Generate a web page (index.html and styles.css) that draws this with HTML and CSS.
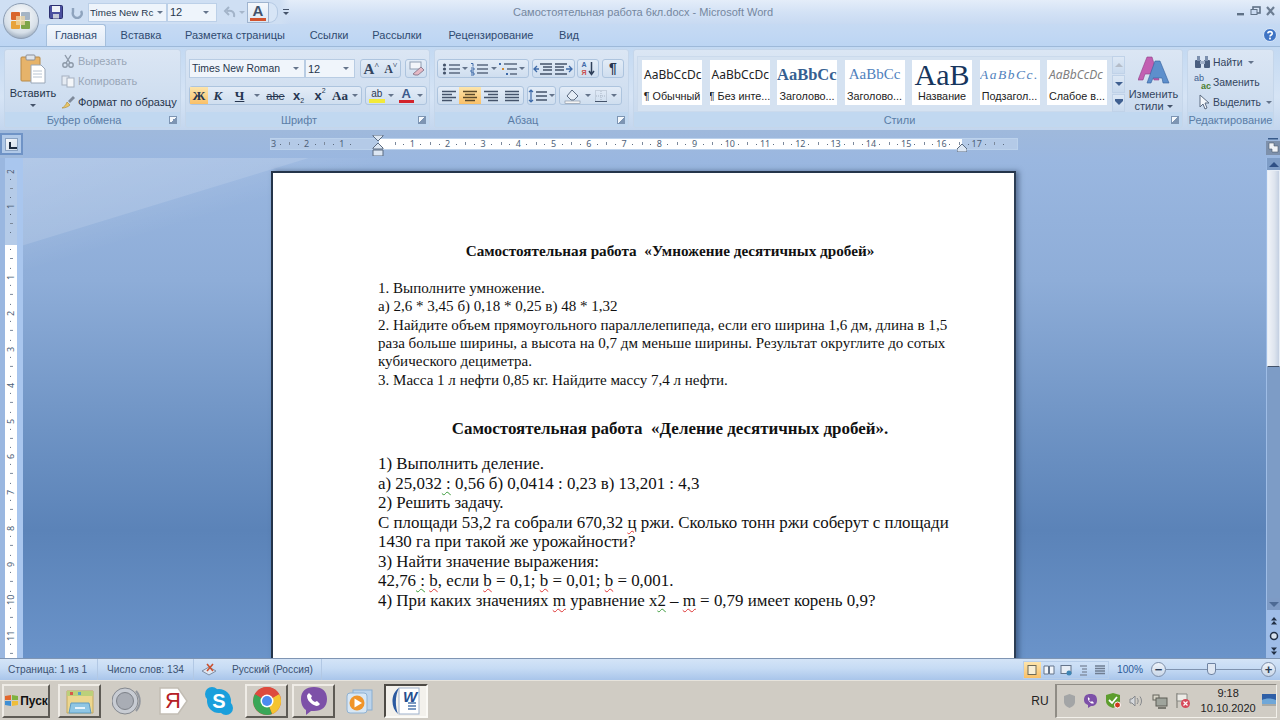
FILE: index.html
```html
<!DOCTYPE html>
<html lang="ru">
<head>
<meta charset="utf-8">
<title>Самостоятельная работа 6кл.docx - Microsoft Word</title>
<link rel="stylesheet" href="styles.css">
</head>
<body>
<div class="app">
  <div class="orb">
    <svg width="36" height="36" viewBox="0 0 36 36"><defs><radialGradient id="o" cx=".5" cy=".35" r=".7"><stop offset="0" stop-color="#fff"/><stop offset=".7" stop-color="#d6dfe8"/><stop offset="1" stop-color="#8a9bb0"/></radialGradient></defs><circle cx="18" cy="18" r="17.5" fill="url(#o)" stroke="#8c9db3"/><rect x="8" y="9" width="9" height="8" rx="1" fill="#d9662b"/><rect x="18" y="9" width="9" height="8" rx="1" fill="#a5b5c5"/><rect x="8" y="18" width="9" height="8" rx="1" fill="#e8a33c"/><rect x="18" y="18" width="9" height="8" rx="1" fill="#7da548"/><rect x="13" y="13" width="9" height="9" fill="#f0d9a8" opacity=".75"/></svg>
  </div>
  <header class="titlebar">
    <div class="qat">
      <svg class="qi" width="14" height="14" viewBox="0 0 14 14"><rect x=".5" y=".5" width="13" height="13" rx="1" fill="#4a4f9e" stroke="#2c3070"/><rect x="3" y="1" width="8" height="6" fill="#eef2f8"/><rect x="4" y="9" width="6" height="4.5" fill="#c4c9d8"/></svg>
      <svg class="qi2" width="14" height="14" viewBox="0 0 14 14"><path d="M3 3v4a4.5 4.5 0 1 0 8 -1" fill="none" stroke="#8ea3bd" stroke-width="2.4"/></svg>
      <div class="qcombo qc1"><span>Times New Rc</span><i class="drop"></i></div>
      <div class="qcombo qc2"><span>12</span><i class="drop"></i></div>
      <div class="qundo"><svg width="14" height="12" viewBox="0 0 14 12"><path d="M11 11c1-5-2-7-7-6M6 1 2 5l4 4" fill="none" stroke="#a3b4c9" stroke-width="2"/></svg><i class="drop pale"></i></div>
      <div class="qcolor"><b class="fa">A</b></div>
      <div class="qend"></div>
      <div class="qmore"><i class="bar"></i><i class="drop dark"></i></div>
    </div>
    <div class="title">Самостоятельная работа 6кл.docx - Microsoft Word</div>
    <div class="winbtns">
      <svg width="40" height="14" viewBox="0 0 40 14"><rect x="2" y="8" width="7" height="2.4" fill="#5f7186"/><rect x="18" y="2" width="7" height="6" fill="none" stroke="#5f7186" stroke-width="1.6"/><rect x="16" y="4.5" width="6" height="5" fill="#c9daf1" stroke="#5f7186"/><path d="M32 2l7 8M39 2l-7 8" stroke="#6c7d92" stroke-width="2.2"/></svg>
    </div>
  </header>

  <nav class="tabs">
    <span class="tab active">Главная</span><span class="tab">Вставка</span><span class="tab">Разметка страницы</span><span class="tab">Ссылки</span><span class="tab">Рассылки</span><span class="tab">Рецензирование</span><span class="tab">Вид</span>
    <svg class="help" width="14" height="14" viewBox="0 0 14 14"><circle cx="7" cy="7" r="6.5" fill="#3f74c4" stroke="#dbe8f8"/><path d="M4.8 5.4C5 3 9.2 3 9.2 5.4 9.2 7 7 7 7 8.6" fill="none" stroke="#fff" stroke-width="1.6"/><rect x="6.1" y="9.6" width="1.8" height="1.8" fill="#fff"/></svg>
  </nav>

  <section class="ribbon">
    <div class="group">
      <div class="gbody clip">
        <div class="paste">
          <svg width="26" height="30" viewBox="0 0 26 30"><rect x="1" y="3" width="19" height="24" rx="1" fill="#e6b36a" stroke="#b88a48"/><rect x="6" y="1" width="9" height="5" rx="1" fill="#dfe5ec" stroke="#8b8f98"/><path d="M11 11h10l4 4v14H11z" fill="#fff" stroke="#9aa7b8"/><path d="M13 17h9M13 20h9M13 23h9" stroke="#b8c4d2"/></svg>
          <span class="pl">Вставить</span>
          <i class="drop dark"></i>
        </div>
        <div class="clips">
          <div class="crow off"><svg width="14" height="14" viewBox="0 0 14 14"><path d="M4 1l5 8M10 1 5 9" stroke="#8d99a8" stroke-width="1.4"/><circle cx="4" cy="11" r="2.2" fill="none" stroke="#8d99a8" stroke-width="1.4"/><circle cx="10" cy="11" r="2.2" fill="none" stroke="#8d99a8" stroke-width="1.4"/></svg><span>Вырезать</span></div>
          <div class="crow off"><svg width="14" height="14" viewBox="0 0 14 14"><rect x="1" y="2" width="7" height="9" fill="#e5ebf3" stroke="#a5b0bf"/><rect x="6" y="4" width="7" height="9" fill="#f4f6f9" stroke="#a5b0bf"/></svg><span>Копировать</span></div>
          <div class="crow"><svg width="14" height="14" viewBox="0 0 14 14"><path d="M1 13c2-1 4-3 5-6l3 3c-2 2-5 3-8 3z" fill="#e9c667" stroke="#a98732" stroke-width=".6"/><path d="M7 6l5-5 2 2-5 5z" fill="#7f8a9a"/></svg><span>Формат по образцу</span></div>
        </div>
      </div>
      <div class="gfoot"><span>Буфер обмена</span><i class="launch"></i></div>
    </div>

    <div class="group">
      <div class="gbody rows">
        <div class="row">
          <div class="combo cfont"><span>Times New Roman</span><i class="drop"></i></div>
          <div class="combo csize"><span>12</span><i class="drop"></i></div>
          <div class="bx grow"><b class="gl lg">A<sup>˄</sup></b><b class="gl sm">A<sup>˅</sup></b></div>
          <div class="bx clear"><svg width="18" height="16" viewBox="0 0 18 16"><rect x="3" y="1" width="11" height="7" fill="#f3f5fa" stroke="#8f9db2"/><path d="M6 13l8-7 3 3-6 5H8z" fill="#e5b8c4" stroke="#8f7f92"/></svg></div>
        </div>
        <div class="row">
          <div class="bx fmt">
            <span class="f hot bold">Ж</span><span class="f it">К</span><span class="f un">Ч</span><i class="drop mid"></i>
            <span class="f strike">abe</span><span class="f sub">x<small>2</small></span><span class="f sup">x<small>2</small></span><span class="f aa">Aa</span><i class="drop mid"></i>
          </div>
          <div class="bx hl">
            <span class="mark"><em>ab</em><u></u></span><i class="drop mid"></i><span class="fcolor"><em>A</em><u></u></span><i class="drop mid"></i>
          </div>
        </div>
      </div>
      <div class="gfoot"><span>Шрифт</span><i class="launch"></i></div>
    </div>

    <div class="group">
      <div class="gbody rows pad3">
        <div class="row r3">
          <div class="bx lists">
            <svg width="20" height="14" viewBox="0 0 20 14"><path d="M8 3h11M8 7h11M8 11h11" stroke="#5b6a80" stroke-width="1.4"/><circle cx="3.5" cy="3" r="1.6" fill="#44536a"/><circle cx="3.5" cy="7" r="1.6" fill="#44536a"/><circle cx="3.5" cy="11" r="1.6" fill="#44536a"/></svg><i class="drop"></i>
            <svg width="20" height="14" viewBox="0 0 20 14"><path d="M8 3h11M8 7h11M8 11h11" stroke="#5b6a80" stroke-width="1.4"/><path d="M2 1.5h2v3M2 6h3v2H2v2h3M2 11h3v2H2" fill="none" stroke="#3e6aa8"/></svg><i class="drop"></i>
            <svg width="20" height="14" viewBox="0 0 20 14"><path d="M6 2h13M9 7h10M12 12h7" stroke="#5b6a80" stroke-width="1.4"/><rect x="1" y="1" width="2" height="2" fill="#3e6aa8"/><rect x="4" y="6" width="2" height="2" fill="#d08a34"/><rect x="8" y="11" width="2" height="2" fill="#3e6aa8"/></svg><i class="drop"></i>
          </div>
          <div class="bx indent">
            <svg width="20" height="14" viewBox="0 0 20 14"><path d="M7 2h12M10 5h9M10 8h9M7 12h12" stroke="#44536a" stroke-width="1.4"/><path d="M6 7H1M4 4 1 7l3 3" fill="none" stroke="#3e6aa8" stroke-width="1.3"/></svg>
            <svg width="20" height="14" viewBox="0 0 20 14"><path d="M1 2h12M1 5h9M1 8h9M1 12h12" stroke="#44536a" stroke-width="1.4"/><path d="M12 7h6M15 4l3 3-3 3" fill="none" stroke="#3e6aa8" stroke-width="1.3"/></svg>
          </div>
          <div class="bx sort"><span class="az"><em>А</em><em class="red">Я</em></span><svg width="7" height="15" viewBox="0 0 7 15"><path d="M3.5 1v12M1 10l2.500 3.500L6 10" fill="none" stroke="#30405a" stroke-width="1.500"/></svg></div>
          <div class="bx para">¶</div>
        </div>
        <div class="row r3">
          <div class="bx aligns">
            <span class="al"><svg width="16" height="12" viewBox="0 0 16 12"><path d="M1 1.500h14M1 4.500h10M1 7.500h14M1 10.500h10" stroke="#44536a" stroke-width="1.600"/></svg></span>
            <span class="al hot"><svg width="16" height="12" viewBox="0 0 16 12"><path d="M1 1.500h14M3 4.500h10M1 7.500h14M3 10.500h10" stroke="#5b4a2a" stroke-width="1.600"/></svg></span>
            <span class="al"><svg width="16" height="12" viewBox="0 0 16 12"><path d="M1 1.500h14M5 4.500h10M1 7.500h14M5 10.500h10" stroke="#44536a" stroke-width="1.600"/></svg></span>
            <span class="al"><svg width="16" height="12" viewBox="0 0 16 12"><path d="M1 1.500h14M1 4.500h14M1 7.500h14M1 10.500h14" stroke="#44536a" stroke-width="1.600"/></svg></span>
          </div>
          <div class="bx spacing"><svg width="20" height="14" viewBox="0 0 20 14"><path d="M3 1v12M1 3l2-2 2 2M1 11l2 2 2-2" fill="none" stroke="#3e6aa8" stroke-width="1.200"/><path d="M8 3h11M8 7h11M8 11h11" stroke="#44536a" stroke-width="1.400"/></svg><i class="drop"></i></div>
          <div class="bx shade">
            <svg width="18" height="16" viewBox="0 0 18 16"><path d="M3 8l5-6 6 6-4 4H7z" fill="#e5edf6" stroke="#5b6a80"/><rect x="1" y="13" width="15" height="2.500" fill="#f4f4f4" stroke="#7f8c9e" stroke-width=".6"/></svg><i class="drop"></i>
            <svg width="14" height="14" viewBox="0 0 14 14"><rect x="1.500" y="1.500" width="11" height="11" fill="none" stroke="#a9b5c5" stroke-dasharray="1 1"/><path d="M7 2v10M2 7h10" stroke="#a9b5c5" stroke-dasharray="1 1"/><path d="M1 12.500h12" stroke="#44536a"/></svg><i class="drop"></i>
          </div>
        </div>
      </div>
      <div class="gfoot"><span>Абзац</span><i class="launch"></i></div>
    </div>

    <div class="group">
      <div class="gbody styles">
        <div class="gallery">
          <div class="card"><span class="pv p1">AaBbCcDc</span><span class="lb">¶ Обычный</span></div>
          <div class="card"><span class="pv p1">AaBbCcDc</span><span class="lb">¶ Без инте...</span></div>
          <div class="card"><span class="pv p3">AaBbCc</span><span class="lb">Заголово...</span></div>
          <div class="card"><span class="pv p4">AaBbCc</span><span class="lb">Заголово...</span></div>
          <div class="card"><span class="pv p5">AaB</span><span class="lb">Название</span></div>
          <div class="card"><span class="pv p6">AaBbCc.</span><span class="lb">Подзагол...</span></div>
          <div class="card"><span class="pv p7">AaBbCcDc</span><span class="lb">Слабое в...</span></div>
        </div>
        <div class="scroller"><span class="up"></span><span class="dn"></span><span class="more"></span></div>
        <div class="change">
          <svg width="32" height="29" viewBox="0 0 32 29"><path d="M0 24 9 1h5l7 23h-5l-2-6H7l-2 6z" fill="#c25fb2" stroke="#8f4086" stroke-width=".6"/><path d="M9 27 17 5h5l9 22h-6l-1-5h-9l-2 5z" fill="#5d8fcc" stroke="#345f9c" stroke-width=".6"/></svg>
          <span>Изменить</span><span class="sty">стили<i class="drop dark"></i></span>
        </div>
      </div>
      <div class="gfoot"><span>Стили</span><i class="launch"></i></div>
    </div>

    <div class="group">
      <div class="gbody clip edit">
        <div class="erow"><svg width="17" height="14" viewBox="0 0 17 14"><rect x="1" y="5" width="6" height="8" rx="1" fill="#4a5f80"/><rect x="10" y="5" width="6" height="8" rx="1" fill="#4a5f80"/><rect x="3" y="1" width="3" height="5" fill="#7b8fae"/><rect x="11" y="1" width="3" height="5" fill="#7b8fae"/><rect x="6" y="6" width="5" height="3" fill="#a0b0c8"/></svg><span>Найти</span><i class="drop"></i></div>
        <div class="erow"><span class="abac"><em>ab</em><em class="ac">ac</em></span><span>Заменить</span></div>
        <div class="erow"><svg width="17" height="16" viewBox="0 0 17 16"><path d="M6 1v12l3-3 2 5 2-1-2-5h4z" fill="#f4f7fb" stroke="#5c6c82"/></svg><span>Выделить</span><i class="drop"></i></div>
      </div>
      <div class="gfoot"><span>Редактирование</span></div>
    </div>
  </section>

  <main class="workspace">
    <div class="corner"><span class="tabsel"><i></i></span></div>
    <div class="hr-wrap">
      <div class="hruler">
        <div class="hscale">
          <span class="first">3</span><span>2</span><span>1</span><span class="ind"></span><span>1</span><span>2</span><span>3</span><span>4</span><span>5</span><span>6</span><span>7</span><span>8</span><span>9</span><span>10</span><span>11</span><span>12</span><span>13</span><span>14</span><span>15</span><span>16</span><span>17</span><span class="last"></span>
        </div>
        <svg class="marker" width="12" height="21" viewBox="0 0 12 21"><path d="M1 0h10v1L6 6 1 1zM6 8l5 5v1H1v-1zM1 15h10v6H1z" fill="#dde7f3" stroke="#5a6b80"/></svg>
        <svg class="rmarker" width="10" height="8" viewBox="0 0 10 8"><path d="M5 0l5 5v3H0V5z" fill="#dde7f3" stroke="#5a6b80"/></svg>
      </div>
    </div>
    <div class="mini"><svg width="14" height="22" viewBox="0 0 14 22"><rect x="2" y="0" width="10" height="1.500" fill="#375a8a"/><rect x="0" y="3" width="14" height="14" fill="#7d90ab"/><path d="M3 5h5v3h4v6H6v-3H3z" fill="#f1f4f8" stroke="#4d5a6d" stroke-width=".6"/></svg></div>

    <aside class="vcol">
      <div class="vruler">
        <div class="vinner">
          <span class="vc t">2</span><span class="vc t">1</span><span class="vc t"></span><span class="vc">1</span><span class="vc">2</span><span class="vc">3</span><span class="vc">4</span><span class="vc">5</span><span class="vc">6</span><span class="vc">7</span><span class="vc">8</span><span class="vc">9</span><span class="vc">10</span><span class="vc">11</span>
        </div>
      </div>
    </aside>

    <div class="doc">
      <article class="page">
        <h1 class="h1">Самостоятельная работа&nbsp; «Умножение десятичных дробей»</h1>
        <div class="blank"></div>
        <p>1. Выполните умножение.</p>
        <p>а) 2,6 * 3,45 б) 0,18 * 0,25 в) 48 * 1,32</p>
        <p>2. Найдите объем прямоугольного параллелепипеда, если его ширина 1,6 дм, длина в 1,5</p>
        <p>раза больше ширины, а высота на 0,7 дм меньше ширины. Результат округлите до сотых</p>
        <p>кубического дециметра.</p>
        <p>3. Масса 1 л нефти 0,85 кг. Найдите массу 7,4 л нефти.</p>
        <h2 class="h2">Самостоятельная работа&nbsp; «Деление десятичных дробей».</h2>
        <div class="s2">
          <p>1) Выполнить деление.</p>
          <p>а) 25,032<span class="gr"> :</span> 0,56 б) 0,0414 : 0,23 в) 13,201 : 4,3</p>
          <p>2) Решить задачу.</p>
          <p>С площади 53,2 га собрали 670,32 <span class="sp">ц</span> ржи. Сколько тонн ржи соберут с площади</p>
          <p>1430 га при такой же урожайности?</p>
          <p>3) Найти значение выражения:</p>
          <p>42,76<span class="gr"> :</span> <span class="sp">b</span>, если <span class="sp">b</span> = 0,1; <span class="sp">b</span> = 0,01; <span class="sp">b</span> = 0,001.</p>
          <p>4) При каких значениях <span class="sp">m</span> уравнение х<span class="gr">2</span> – <span class="sp">m</span> = 0,79 имеет корень 0,9?</p>
        </div>
      </article>
    </div>

    <aside class="scroll">
      <span class="sarrow"><i class="tri-up"></i></span>
      <span class="thumb"></span>
      <span class="track"></span>
      <span class="sarrow low"><i class="tri-dn"></i></span>
      <div class="navbtns">
        <svg width="10" height="10" viewBox="0 0 10 10"><path d="M5 1l3 3.500H2zM5 5l3 3.500H2z" fill="#223045"/></svg>
        <svg width="10" height="10" viewBox="0 0 10 10"><circle cx="5" cy="5" r="3.500" fill="#d8e2ee" stroke="#223045" stroke-width="1.500"/></svg>
        <svg width="10" height="10" viewBox="0 0 10 10"><path d="M5 5 2 1.500h6zM5 9 2 5.500h6z" fill="#223045"/></svg>
      </div>
    </aside>
  </main>

  <footer class="status">
    <div class="sleft">
      <span class="sc c1">Страница: 1 из 1</span>
      <span class="sc c2">Число слов: 134</span>
      <span class="sc c3"><svg width="16" height="14" viewBox="0 0 16 14"><path d="M1 8l7-4 7 4-7 4z" fill="#dfe7f2" stroke="#7f8da3"/><path d="M6 1l6 7M12 1 6 8" stroke="#c9502f" stroke-width="1.600"/></svg></span>
      <span class="sc c4">Русский (Россия)</span>
    </div>
    <div class="sright">
      <div class="views">
        <span class="v hot"><svg width="12" height="12" viewBox="0 0 12 12"><rect x="2" y="1.500" width="8" height="9" fill="#f8efd6" stroke="#6d6a58"/></svg></span>
        <span class="v"><svg width="12" height="12" viewBox="0 0 12 12"><path d="M1 2h4.500v8H1zM6.500 2H11v8H6.500z" fill="#f1f5fa" stroke="#64748a"/></svg></span>
        <span class="v"><svg width="12" height="12" viewBox="0 0 12 12"><rect x="1" y="1.500" width="10" height="8" fill="#e7edf5" stroke="#64748a"/><circle cx="9" cy="9" r="2.500" fill="#3f86b5"/></svg></span>
        <span class="v"><svg width="12" height="12" viewBox="0 0 12 12"><path d="M3 2h7M5 5h5M5 8h5M3 11h7" stroke="#8593a7" stroke-width="1.300"/></svg></span>
        <span class="v"><svg width="12" height="12" viewBox="0 0 12 12"><path d="M1 2h10M1 4.500h10M1 7h10M1 9.500h10" stroke="#6f7d91" stroke-width="1.300"/></svg></span>
      </div>
      <span class="pct">100%</span>
      <span class="zb">−</span>
      <span class="zline"><i></i></span>
      <span class="zb">+</span>
    </div>
  </footer>

  <div class="taskbar">
    <div class="tb start"><svg width="15" height="14" viewBox="0 0 15 14"><path d="M1 2l6-1v5H1z" fill="#e2672c"/><path d="M8 1l6 1v4H8z" fill="#7fb23f"/><path d="M1 7h6v5l-6-1z" fill="#3f8fd4"/><path d="M8 7h6v4l-6 1z" fill="#efbe3a"/></svg><b>Пуск</b></div>
    <div class="tb folder"><svg width="28" height="28" viewBox="0 0 28 28"><path d="M1 4h26v22H1z" fill="#ecd68e" stroke="#c4a95e"/><path d="M1 4h26v5H1z" fill="#bcd07a"/><rect x="4" y="5" width="3" height="3" fill="#d9584a"/><rect x="12" y="5" width="3" height="3" fill="#5aa0c8"/><path d="M5 16h18l2 10H3z" fill="#8fc6e4" stroke="#5f9cc4"/><rect x="9" y="20" width="10" height="2" fill="#e8f4fb"/></svg></div>
    <div class="ti vol"><svg width="30" height="30" viewBox="0 0 30 30"><circle cx="13" cy="15" r="13" fill="#c8ccd3" stroke="#84888f"/><circle cx="13" cy="15" r="8.500" fill="#a9adb5" stroke="#7d8188"/><path d="M24 5c5 6 5 14 0 20" fill="none" stroke="#93979e" stroke-width="2"/></svg></div>
    <div class="ti yan"><svg width="30" height="30" viewBox="0 0 30 30"><path d="M2 2h18l9 13-9 13H2z" fill="#fff" stroke="#c2bdb4" stroke-width="1.500"/></svg><span>Я</span></div>
    <div class="ti sky"><svg width="30" height="30" viewBox="0 0 30 30"><circle cx="15" cy="15" r="12" fill="#1a9fdc"/><circle cx="8" cy="8" r="7" fill="#1a9fdc"/><circle cx="22" cy="22" r="7" fill="#1a9fdc"/></svg><span>S</span></div>
    <div class="tb chrome"><svg width="28" height="28" viewBox="0 0 28 28"><circle cx="14" cy="14" r="14" fill="#dd4b3e"/><path d="M14 14 26.100 7a14 14 0 0 1-7 20.100z" fill="#f4c430"/><path d="M14 14 18.900 27.100A14 14 0 0 1 1.900 7z" fill="#3aa757"/><path d="M14 14 1.900 7A14 14 0 0 1 26.100 7z" fill="#dd4b3e"/><circle cx="14" cy="14" r="6.500" fill="#fff"/><circle cx="14" cy="14" r="5" fill="#4c8bf0"/></svg></div>
    <div class="tb viber"><svg width="28" height="30" viewBox="0 0 28 30"><path d="M14 1c8 0 13 4 13 12s-5 12-13 12h-3l-5 4v-5C3 22 1 18 1 13 1 5 6 1 14 1z" fill="#7d51a8"/><path d="M9 7l3 3-1 2c1 2 2 3 4 4l2-1 3 3c-2 3-5 2-8 0s-5-5-5-8c0-1 1-2 2-3z" fill="#fff"/></svg></div>
    <div class="ti wmp"><svg width="28" height="26" viewBox="0 0 28 26"><rect x="7" y="2" width="19" height="20" fill="#bcd4ec" stroke="#89aeD1"/><rect x="1" y="5" width="20" height="20" rx="3" fill="#d8e7f4" stroke="#8fb2d3"/><circle cx="11" cy="15" r="7.500" fill="#f0952b"/><path d="M8.500 10.500 16 15l-7.500 4.500z" fill="#fff"/></svg></div>
    <div class="tb word"><svg width="30" height="30" viewBox="0 0 30 30"><rect x="8" y="2" width="20" height="26" fill="#fff" stroke="#9fb2cc"/><path d="M17 17h8M17 20h8M17 23h8" stroke="#4d77ad" stroke-width="1.300"/><path d="M8 2C0 7-1 21 7 28 4 20 4 10 8 2z" fill="#2c5aa0"/></svg><span class="w">W</span></div>
    <div class="lang">RU</div>
    <div class="tray">
      <svg width="13" height="16" viewBox="0 0 13 16"><path d="M6.500 1 12 3v6c0 3-3 5-5.500 6C4 14 1 12 1 9V3z" fill="#a3a5a6"/></svg>
      <svg width="15" height="16" viewBox="0 0 15 16"><path d="M7.500 1C12 1 14 3 14 7s-2 6-6 6l-3 2v-3C2 11 1 9 1 7c0-4 2-6 6.500-6z" fill="#7d51a8"/><path d="M5 4l2 2-1 1c.5 1 1 1.500 2 2l1-1 2 2c-2 2-7-2-6-6z" fill="#fff"/></svg>
      <svg width="16" height="17" viewBox="0 0 16 17"><path d="M1 3l7-2 7 2v6c0 4-4 6-7 7-3-1-7-3-7-7z" fill="#5d9d2e"/><path d="M4 8l3 3 5-6" fill="none" stroke="#fff" stroke-width="1.800"/><circle cx="12.500" cy="13" r="3" fill="#d0391f" stroke="#fff"/></svg>
      <svg width="16" height="14" viewBox="0 0 16 14"><path d="M1 5h2l3-3v10L3 9H1z" fill="#d5d8dc" stroke="#85888c"/><path d="M8 4c1.500 2 1.500 4 0 6M11 2.500c2 3 2 6 0 9" fill="none" stroke="#85888c"/></svg>
      <svg width="16" height="16" viewBox="0 0 16 16"><rect x="1" y="2" width="6" height="5" fill="#d8d5c8" stroke="#65655c"/><rect x="4" y="5" width="11" height="8" fill="#9fa49c" stroke="#5c5c54"/><path d="M6 15h8" stroke="#5c5c54" stroke-width="1.500"/></svg>
      <svg width="16" height="17" viewBox="0 0 16 17"><path d="M2 1v15" stroke="#77766f"/><path d="M2 2h10v7H2z" fill="#ecebe6" stroke="#8a8a85"/><circle cx="10.500" cy="11.500" r="4.500" fill="#d6495a"/><path d="M8.500 9.500l4 4M12.500 9.500l-4 4" stroke="#fff" stroke-width="1.200"/></svg>
      <div class="clock"><span>9:18</span><span>10.10.2020</span></div>
      <svg width="14" height="13" viewBox="0 0 14 13"><rect x="0" y="0" width="14" height="10" fill="#2f5fa6"/><path d="M0 6c4-2 9-2 14 0v4H0z" fill="#6fa7d8"/><rect x="0" y="10" width="14" height="2" fill="#a8a9a5"/></svg>
    </div>
  </div>
</div>
</body>
</html>
```

FILE: styles.css
```css
* { box-sizing: border-box; }
html, body { margin: 0; padding: 0; }
body { width: 1280px; height: 720px; overflow: hidden; font-family: "Liberation Sans", "Noto Sans", sans-serif; font-size: 11px; color: #3e5272; }
i, em, u { font-style: normal; text-decoration: none; display: block; }
svg { display: block; flex: none; }
.app { position: relative; display: flex; flex-direction: column; width: 1280px; height: 720px; overflow: hidden; background: #d4d0c8; }

.orb { position: absolute; left: 3px; top: 3px; z-index: 3; }

.drop { width: 0; height: 0; border: 3px solid transparent; border-top: 3px solid #64748b; border-bottom: 0; flex: none; }
.drop.dark { border-top-color: #44536a; }
.drop.pale { border-top-color: #a6b6ca; }
.drop.mid { border-top-color: #64748b; margin: 0 3px; }

/* title bar */
.titlebar { height: 24px; flex: none; display: grid; grid-template-columns: 1fr auto 1fr; align-items: center; background: linear-gradient(#e4edf9, #d2e1f5 55%, #c8daf2); }
.qat { display: flex; align-items: center; padding-left: 49px; height: 24px; background: linear-gradient(90deg, #cfdff3 0, #cfdff3 280px, transparent 290px); }
.qi { margin-right: 7px; }
.qi2 { margin-right: 4px; }
.qcombo { height: 19px; display: flex; align-items: center; justify-content: space-between; background: #eef4fb; border: 1px solid #bcd0e8; padding: 0 3px 0 1px; font-size: 9.800px; color: #27364d; white-space: nowrap; }
.qc1 { width: 79px; }
.qc2 { width: 50px; padding-right: 7px; padding-left: 2px; margin-left: 0; font-size: 11px; }
.qundo { width: 30px; height: 20px; display: flex; align-items: center; gap: 2px; padding-left: 6px; }
.qcolor { width: 22px; height: 21px; background: linear-gradient(#f5f8fc, #dce7f4); border: 1px solid #9fb4cf; display: flex; justify-content: center; }
.fa { font-family: "Liberation Sans", sans-serif; font-size: 15px; line-height: 16px; color: #42526b; border-bottom: 3px solid #d2532e; height: 18px; width: 16px; text-align: center; }
.qend { width: 9px; height: 21px; border: 1px solid #b4c9e3; border-left: 0; border-radius: 0 10px 10px 0; background: #d7e5f6; }
.qmore { margin-left: 4px; display: flex; flex-direction: column; gap: 2px; align-items: center; width: 7px; }
.qmore .bar { width: 6px; height: 1px; background: #44536a; }
.title { font-size: 11px; color: #75879f; padding-left: 6px; white-space: nowrap; }
.winbtns { display: flex; justify-content: flex-end; padding-right: 5px; }

/* tabs */
.tabs { height: 22px; flex: none; display: grid; grid-template-columns: 60px 70px 118px 70px 66px 122px 34px 1fr auto; align-items: center; padding: 0 3px 0 46px; background: linear-gradient(#c6daf3, #bcd5f3); }
.tab { text-align: center; font-size: 11px; color: #2f4a70; white-space: nowrap; line-height: 22px; height: 22px; }
.tab.active { grid-column: 1; background: linear-gradient(#f4f8fd, #dfe9f6); border: 1px solid #a5bfdc; border-bottom: 0; border-radius: 3px 3px 0 0; line-height: 21px; }
.help { grid-column: 9; }

/* ribbon */
.ribbon { height: 84px; flex: none; display: grid; grid-template-columns: 177px 245px 195px 550px 87px; column-gap: 4px; padding: 2px 0 2px 4px; background: linear-gradient(#c3d9f2, #d6e4f5 60%, #c3d6ee); border-top: 1px solid #9db9d9; }
.group { display: flex; flex-direction: column; border: 1px solid #c5d6ea; border-radius: 3px; background: linear-gradient(#dbe6f4, #cfdef0 60%, #c5d7ed); min-width: 0; overflow: hidden; }
.gbody { flex: 1; min-height: 0; }
.gfoot { height: 15px; flex: none; display: flex; align-items: center; justify-content: center; position: relative; padding-top: 2px; background: #c1d8f0; color: #5b7da6; font-size: 11px; line-height: 13px; }
.gfoot span:not(:only-child) { margin-right: 17px; }
.launch { position: absolute; right: 3px; top: 4px; width: 8px; height: 8px; border: 1px solid #7d95b3; background: linear-gradient(135deg, #f4f8fc 50%, #7d95b3 50%); }
.clip { display: flex; }
.paste { width: 56px; display: flex; flex-direction: column; align-items: center; padding-top: 4px; flex: none; }
.pl { font-size: 11px; color: #27364d; margin-top: 2px; line-height: 15px; }
.paste .drop { margin-top: 3px; }
.clips { display: flex; flex-direction: column; padding-top: 1px; }
.crow { height: 20.500px; display: flex; align-items: center; gap: 3px; color: #27364d; white-space: nowrap; }
.crow.off { color: #9aa7b8; }
.rows { display: flex; flex-direction: column; gap: 8px; padding: 9px 0 0 3px; }
.pad3 { padding-left: 2px; }
.row { display: flex; gap: 3px; height: 19px; }
.combo { height: 19px; display: flex; align-items: center; justify-content: space-between; background: #f0f5fb; border: 1px solid #b8cce3; color: #27364d; padding: 0 5px 0 2px; font-size: 10.400px; white-space: nowrap; }
.cfont { width: 116px; }
.csize { width: 50px; margin-left: -3px; font-size: 11px; }
.bx { height: 19px; display: flex; align-items: center; border: 1px solid #adc4de; border-radius: 3px; background: linear-gradient(#e3ecf7, #cfdeef); color: #33455f; }
.grow { width: 41px; margin-left: 2px; justify-content: space-around; font-family: "Liberation Serif", serif; }
.gl { display: flex; line-height: 14px; color: #33455f; }
.gl sup { font-size: 8px; line-height: 8px; }
.lg { font-size: 15px; }
.sm { font-size: 12px; }
.clear { width: 22px; margin-left: 1px; justify-content: center; }
.fmt { width: 173px; padding: 0; }
.f { display: flex; align-items: center; justify-content: center; height: 17px; color: #263650; font-family: "Liberation Serif", serif; font-size: 13px; }
.hot { background: linear-gradient(#fde5ac, #f9c068); }
.bold { width: 20px; font-weight: bold; }
.it { width: 22px; font-style: italic; font-weight: bold; }
.un { width: 26px; font-weight: bold; text-decoration: underline; }
.strike { width: 27px; font-size: 11px; text-decoration: line-through; font-family: "Liberation Sans", sans-serif; }
.sub, .sup { width: 24px; font-weight: bold; font-family: "Liberation Sans", sans-serif; }
.f small { font-size: 7px; font-weight: normal; }
.sub small { align-self: flex-end; }
.sup small { align-self: flex-start; }
.aa { width: 20px; font-weight: bold; }
.hl { width: 62px; justify-content: flex-start; padding-left: 3px; }
.mark, .fcolor { display: block; width: 16px; text-align: center; }
.mark em { font-size: 10px; line-height: 11px; color: #2c3b52; }
.mark u { height: 4px; background: #f2ea3a; }
.fcolor em { font: bold 13px/12px "Liberation Sans", sans-serif; color: #3b5a8c; }
.fcolor u { height: 3px; background: #d3242c; }
.fcolor { margin-left: 2px; }
.r3 { gap: 3px; }
.lists { width: 92px; justify-content: space-around; padding: 0 2px; }
.indent { width: 43px; justify-content: space-around; }
.sort { width: 22px; margin-left: -1px; justify-content: center; gap: 1px; }
.az { display: block; font: bold 7px/8px "Liberation Sans", sans-serif; color: #3e6aa8; }
.az .red { color: #c94d4d; }
.para { width: 22px; justify-content: center; font: bold 14px/17px "Liberation Sans", sans-serif; color: #263650; }
.aligns { width: 87px; }
.al { width: 21.500px; height: 17px; display: flex; align-items: center; justify-content: center; }
.spacing { width: 29px; justify-content: center; gap: 1px; }
.shade { width: 63px; justify-content: space-around; padding: 0 2px; }

.styles { display: flex; padding: 6px 0 0 3px; }
.gallery { display: flex; gap: 7.500px; width: 475px; height: 56px; padding: 3px 0 0 4px; border: 1px solid #cbdaec; border-right: 0; background: #d5e2f1; flex: none; }
.card { width: 60px; height: 45px; background: #fff; display: flex; flex-direction: column; align-items: center; flex: none; overflow: hidden; }
.pv { height: 29px; flex: none; display: flex; align-items: center; width: 100%; justify-content: center; overflow: hidden; white-space: nowrap; line-height: 29px; color: #222; }
.lb { font-size: 10.800px; color: #222; line-height: 15px; white-space: nowrap; height: 15px; }
.p1 { font-size: 12px; font-family: "Noto Sans", sans-serif; justify-content: flex-start; padding-left: 2px; }
.p3 { font: bold 16.500px/29px "Liberation Serif", serif; color: #365f91; justify-content: flex-start; padding-left: 0; }
.p4 { font: 15px/29px "Liberation Serif", serif; color: #4f81bd; }
.p5 { font: 30px/29px "Liberation Serif", serif; color: #17365d; justify-content: center; }
.p6 { font: italic 13.500px/29px "Liberation Serif", serif; color: #4f81bd; letter-spacing: 1.500px; }
.p7 { font: italic 12px/29px "Noto Sans", sans-serif; color: #808080; justify-content: flex-start; padding-left: 2px; }
.scroller { width: 13px; height: 56px; display: flex; flex-direction: column; gap: 1px; flex: none; }
.scroller span { flex: 1; border: 1px solid #c0d2e8; background: linear-gradient(#dde8f5, #c9daee); display: flex; align-items: center; justify-content: center; }
.scroller .up::before { content: ""; border: 4px solid transparent; border-bottom: 4px solid #b4bcc8; border-top: 0; }
.scroller .dn::before { content: ""; border: 4px solid transparent; border-top: 4px solid #3f5f90; border-bottom: 0; }
.scroller .more::before { content: ""; border: 4px solid transparent; border-top: 4px solid #3f5f90; border-bottom: 0; box-shadow: 0 -2px 0 #3f5f90; }
.change { flex: 1; display: flex; flex-direction: column; align-items: center; color: #33455f; line-height: 12px; }
.change svg { margin-bottom: 3px; }
.sty { display: flex; align-items: center; gap: 3px; }
.edit { flex-direction: column; padding: 2px 0 0 6px; font-size: 10.400px; }
.erow { height: 20.500px; display: flex; align-items: center; gap: 2px; color: #33455f; white-space: nowrap; }
.erow .drop { margin-left: 3px; }
.abac { display: block; width: 17px; font-size: 9px; line-height: 8px; color: #3f5f90; }
.ac { color: #4a7d2c; font-weight: bold; text-align: right; }

/* workspace */
.workspace { flex: 1; min-height: 0; display: grid; grid-template-columns: 23px 1fr 14px; grid-template-rows: 28px 1fr; background: linear-gradient(#9fb9dc, #9ab7e0 30px, #8eadd8 150px, #6e93c4 300px, #5b83b8 400px, #6a93c9 528px); overflow: hidden; }
.corner { background: #9fb9dc; padding: 3px 0 0 0; }
.tabsel { display: flex; width: 23px; height: 22px; border: 2px solid #6f93c6; background: #b1c9e8; align-items: center; justify-content: center; }
.tabsel i { width: 13px; height: 13px; background: linear-gradient(135deg, #f4f7fb, #d3deec); border: 1px solid #8aa3c4; position: relative; }
.tabsel i::after { content: ""; display: block; width: 6px; height: 5px; margin: 3px 0 0 3px; border-left: 2px solid #1c2a3f; border-bottom: 2px solid #1c2a3f; }
.hr-wrap { padding: 8px 0 0 247px; }
.hruler { position: relative; width: 748px; height: 12px; background: linear-gradient(90deg, #b4cae7 108px, #fff 108px, #fff 691px, #b4cae7 691px); border: 1px solid #bcd2ec; }
.hscale { display: flex; width: 746px; height: 10px; }
.hscale span { flex: 0 0 35.280px; height: 10px; font: 9px/10px "Noto Sans", sans-serif; color: #4d5f78; text-align: center;
  background-image: linear-gradient(#5d6c80, #5d6c80), linear-gradient(#5d6c80, #5d6c80), linear-gradient(#7d8a9c, #7d8a9c);
  background-repeat: no-repeat; background-size: 1px 1px, 1px 1px, 1px 3px; background-position: 25% 5px, 75% 5px, 0 3px; }
.hscale .first { flex: 0 0 18px; text-align: left; background-position: 9px 5px, 9px 5px, 9px 5px; background-size: 1px 1px, 1px 1px, 1px 1px; }
.hscale .last { flex: 1 1 auto; background-position: 9px 5px, 9px 5px, 0 3px; }
.hscale .ind { background-image: none; }
.marker { position: absolute; left: 101px; top: -4px; }
.rmarker { position: absolute; left: 686px; top: 5px; }
.mini { padding-top: 8px; }

.vcol { background: linear-gradient(90deg, #9ab7e0 5px, #a9c6ee 5px); padding: 12px 6px 0 5px; overflow: hidden; }
.vruler { width: 12px; height: 488px; overflow: hidden; background: linear-gradient(#b5cbe8 75px, #fff 75px); }
.vinner { margin-top: -16px; display: flex; flex-direction: column; }
.vc { flex: 0 0 35.900px; width: 12px; writing-mode: vertical-rl; transform: rotate(180deg); text-align: center; font: 9px/12px "Noto Sans", sans-serif; color: #4d5f78;
  background-image: linear-gradient(#5d6c80, #5d6c80), linear-gradient(#5d6c80, #5d6c80), linear-gradient(#7d8a9c, #7d8a9c);
  background-repeat: no-repeat; background-size: 1px 1px, 1px 1px, 3px 1px; background-position: 6px 25%, 6px 75%, 4px 0; }
.vc.t { flex-basis: 35px; }

.doc { min-width: 0; overflow: hidden; padding: 13px 0 0 248px; background: linear-gradient(163deg, rgba(255,255,255,.24) 0, rgba(255,255,255,.17) 83px, rgba(255,255,255,.05) 84px, rgba(255,255,255,0) 110px); }
.page { width: 745px; height: 515px; background: #fff; border-top: 2px solid #24344a; border-left: 2px solid #24344a; border-right: 2px solid #2c3d54; padding: 69px 52px 0 105px; box-shadow: 3px 0 5px rgba(30,50,80,.5); font-family: "Liberation Serif", serif; color: #111; }
.page p { margin: 0; white-space: nowrap; }
.h1 { margin: 0; font-size: 15.200px; line-height: 18.400px; text-align: center; font-weight: bold; }
.blank { height: 18.400px; }
.page > p { font-size: 15.050px; line-height: 18.400px; }
.h2 { margin: 30px 0 15.500px; font-size: 16.950px; line-height: 19.500px; text-align: center; font-weight: bold; }
.s2 p { font-size: 16.920px; line-height: 19.500px; }
.sp { text-decoration: underline wavy #d33; text-decoration-thickness: 1px; text-underline-offset: 2px; }
.gr { text-decoration: underline wavy #3a9a3a; text-decoration-thickness: 1px; text-underline-offset: 2px; }

.scroll { grid-row: 2; grid-column: 3; display: flex; flex-direction: column; background: #7d9cc6; overflow: hidden; border-left: 1px solid #9fbde6; }
.sarrow { height: 12px; display: flex; align-items: center; justify-content: center; background: #7d9cc6; flex: none; }
.tri-up { border: 5px solid transparent; border-bottom: 5px solid #2f5085; border-top: 0; }
.tri-dn { border: 5px solid transparent; border-top: 5px solid #4d6a94; border-bottom: 0; }
.thumb { height: 197px; flex: none; background: linear-gradient(90deg, #f0f3f8, #dde4ee 60%, #c4d0e2); border: 1px solid #e6edf6; border-bottom: 1px solid #42526a; }
.track { flex: 1; background: #7d9cc6; }
.sarrow.low { background: #7e9bc5; }
.navbtns { height: 48px; flex: none; display: flex; flex-direction: column; align-items: center; justify-content: space-around; padding: 3px 0 0; background: #9fbde8; }

/* status */
.status { height: 22px; flex: none; display: flex; justify-content: space-between; align-items: center; background: linear-gradient(#d4e4f7, #c6dbf4 45%, #a9c5ea); color: #3c5272; font-size: 10.200px; border-top: 1px solid #7f95b3; }
.sleft { display: flex; height: 100%; align-items: center; }
.sc { display: flex; align-items: center; height: 100%; border-right: 1px solid #b2c8e4; white-space: nowrap; }
.c1 { padding-left: 8px; width: 98px; }
.c2 { padding-left: 9px; width: 96px; }
.c3 { padding-left: 7px; width: 31px; border-right: 0; }
.c4 { width: 97px; padding-left: 7px; }
.sright { display: flex; align-items: center; height: 100%; padding-right: 4px; }
.views { display: flex; height: 18px; border: 1px solid #b8cee9; width: 86px; align-items: center; }
.v { flex: 1; display: flex; height: 16px; align-items: center; justify-content: center; }
.pct { width: 42px; text-align: center; color: #2b5a99; }
.zb { width: 15px; height: 15px; border-radius: 50%; border: 1px solid #7d8ea8; background: linear-gradient(#eff4fa, #c9d7e9); display: flex; align-items: center; justify-content: center; font: bold 13px/13px "Liberation Sans", sans-serif; color: #2b3c55; }
.zline { width: 95px; height: 1px; background: #7f93af; position: relative; }
.zline i { position: absolute; left: 41px; top: -6px; width: 9px; height: 12px; background: #dfe7f2; border: 1px solid #6f83a2; border-radius: 1px 1px 4px 4px; }

/* taskbar */
.taskbar { height: 40px; flex: none; display: flex; align-items: center; background: #d0ccc4; padding-left: 2px; border-top: 1px solid #e6e3dc; }
.tb { height: 34px; display: flex; align-items: center; justify-content: center; border: 2px solid; border-color: #efece6 #5e5b55 #5e5b55 #efece6; background: #d0ccc4; }
.start { width: 48px; gap: 1px; }
.start b { font: bold 12px/14px "Liberation Sans", sans-serif; color: #111; }
.folder { width: 43px; margin-left: 8px; }
.ti { display: flex; align-items: center; justify-content: center; position: relative; width: 46px; height: 34px; }
.vol { margin-left: 3px; }
.yan span { position: absolute; left: 15px; top: 4px; font: 22px/26px "Liberation Sans", sans-serif; color: #b52026; }
.sky span { position: absolute; left: 0; right: 0; text-align: center; font: bold 20px/34px "Liberation Sans", sans-serif; color: #fff; }
.chrome { width: 43px; margin-left: 3px; }
.viber { width: 43px; margin-left: 4px; }
.wmp { margin-left: 1px; width: 48px; }
.word { width: 44px; position: relative; border-color: #4d4a45 #fbfaf6 #fbfaf6 #4d4a45; background: #f3f1ec; }
.w { position: absolute; left: 17px; top: 3px; font: italic bold 15px/16px "Liberation Sans", sans-serif; color: #274f90; }
.lang { margin-left: auto; width: 24px; font: 12px/14px "Liberation Sans", sans-serif; color: #222; margin-right: 3px; text-align: center; }
.tray { margin-right: 3px; width: 222px; height: 34px; display: flex; align-items: center; gap: 7.200px; padding: 0 0 0 6px; border: 1px solid; border-color: #8f8c85 #f2f0ea #f2f0ea #8f8c85; border-left-width: 2px; color: #222; }
.clock { display: flex; flex-direction: column; align-items: center; width: 54px; font: 11px/15px "Liberation Sans", sans-serif; color: #222; margin: 1px 0 0 3px; white-space: nowrap; }
```
